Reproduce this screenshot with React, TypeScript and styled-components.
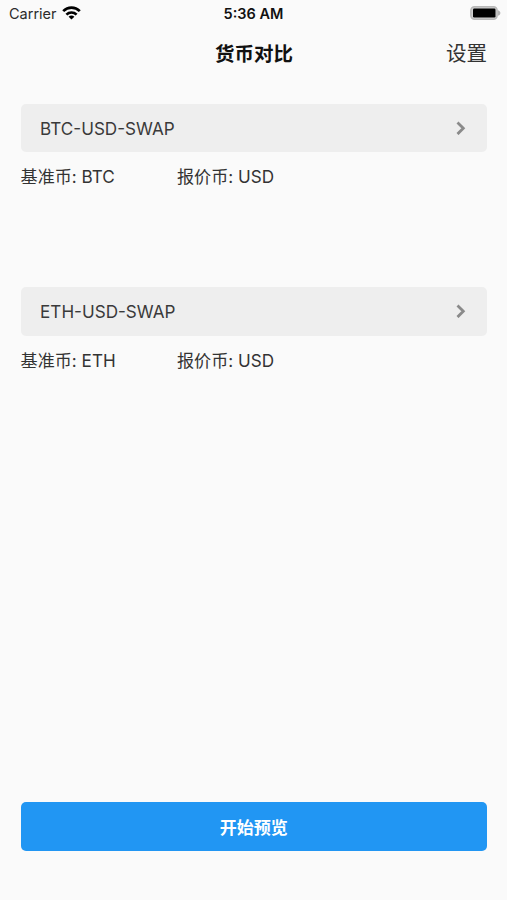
import React from "react";
import styled, { createGlobalStyle } from "styled-components";

const Global = createGlobalStyle`
  * { box-sizing: border-box; }
  body { margin: 0; background: #fafafa; }
`;

const Screen = styled.div`
  width: 507px;
  height: 900px;
  display: flex;
  flex-direction: column;
  background: #fafafa;
  color: #333;
  font-family: Inter, "Noto Sans CJK SC", sans-serif;
`;

const StatusBar = styled.header`
  height: 27px;
  flex: none;
  display: grid;
  grid-template-columns: 1fr auto 1fr;
  align-items: center;
  padding: 0 6px 0 9px;
  font-size: 14.5px;
  line-height: 27px;
  color: #2b2b2b;
`;

const Carrier = styled.div`
  display: flex;
  align-items: center;
  gap: 5px;

  svg { margin-bottom: 2px; }
`;

const Clock = styled.time`
  margin-right: 3px;
  font-size: 14.5px;
  font-weight: 600;
  color: #111;
`;

const BatterySlot = styled.div`
  display: flex;
  justify-content: flex-end;
  padding-bottom: 1px;
`;

const NavBar = styled.nav`
  height: 50px;
  flex: none;
  display: grid;
  grid-template-columns: 1fr auto 1fr;
  align-items: center;
  padding: 3px 20px 0 21px;
`;

const Title = styled.h1`
  grid-column: 2;
  margin: 0;
  font-size: 19.5px;
  line-height: 28px;
  font-weight: 700;
  color: #111;
`;

const Settings = styled.button`
  justify-self: end;
  padding: 0;
  border: 0;
  background: none;
  font: inherit;
  font-size: 20.5px;
  line-height: 28px;
  color: #333;
`;

const Pairs = styled.main`
  flex: 1;
  display: flex;
  flex-direction: column;
  gap: 93.3px;
  padding: 27px 20px 0 20.6px;
`;

const Pair = styled.section`
  height: 90px;
`;

const Picker = styled.button`
  width: 100%;
  height: 48.3px;
  display: flex;
  align-items: center;
  justify-content: space-between;
  padding: 0 20.5px 0 19.5px;
  border: 0;
  border-radius: 5px;
  background: #eeeeee;
  color: #3a3a3a;
  font: inherit;
  font-size: 17.1px;
`;

const Details = styled.div`
  display: grid;
  grid-template-columns: 156.4px 1fr;
  padding-top: 13px;
  font-size: 17.1px;
  line-height: 24px;
`;

const Footer = styled.footer`
  flex: none;
  padding: 0 20px 49px 20.5px;
`;

const Preview = styled.button`
  width: 100%;
  height: 49px;
  display: block;
  padding: 0;
  border: 0;
  border-radius: 5px;
  background: #2196f3;
  color: #fff;
  font: inherit;
  font-size: 17px;
  font-weight: 700;
`;

const WifiIcon = () => (
  <svg width="19" height="14" viewBox="0 0 19 14" fill="none" stroke="#000" strokeWidth="2.7">
    <path d="M1.2 5.1C5.9.5 13.1.5 17.8 5.1" />
    <path d="M4.4 8.6c2.9-2.8 7.3-2.8 10.2 0" />
    <path d="M9.5 13.6 6.6 10.8c1.7-1.6 4.1-1.6 5.8 0z" fill="#000" stroke="none" />
  </svg>
);

const BatteryIcon = () => (
  <svg width="31" height="14" viewBox="0 0 31 14">
    <rect x=".9" y=".8" width="26.2" height="12.4" rx="3.6" fill="#d0d0d0" stroke="#b8b8b8" strokeWidth="1.6" />
    <rect x="3" y="2.5" width="22.5" height="9" rx="1.2" fill="#000" />
    <path d="M28 4.2c3.2 1 3.2 4.6 0 5.6z" fill="#b2b2b2" />
  </svg>
);

const ChevronIcon = () => (
  <svg width="12" height="14" viewBox="0 0 12 14" fill="none" stroke="#8a8a8a" strokeWidth="2.8">
    <path d="m2.5 1.5 5.8 5.8-5.8 5.8" />
  </svg>
);

const pairs = [
  { id: "BTC-USD-SWAP", base: "BTC", quote: "USD" },
  { id: "ETH-USD-SWAP", base: "ETH", quote: "USD" },
];

export default function App() {
  return (
    <Screen>
      <Global />
      <StatusBar>
        <Carrier>Carrier <WifiIcon /></Carrier>
        <Clock>5:36 AM</Clock>
        <BatterySlot><BatteryIcon /></BatterySlot>
      </StatusBar>
      <NavBar>
        <Title>货币对比</Title>
        <Settings>设置</Settings>
      </NavBar>
      <Pairs>
        {pairs.map((pair) => (
          <Pair key={pair.id}>
            <Picker>{pair.id}<ChevronIcon /></Picker>
            <Details>
              <span>基准币: {pair.base}</span>
              <span>报价币: {pair.quote}</span>
            </Details>
          </Pair>
        ))}
      </Pairs>
      <Footer><Preview>开始预览</Preview></Footer>
    </Screen>
  );
}
